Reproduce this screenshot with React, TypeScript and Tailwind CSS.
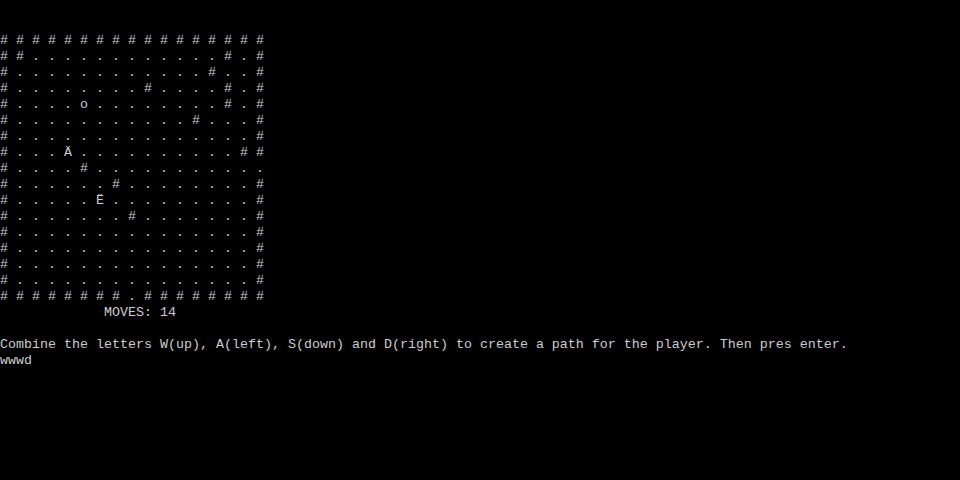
const rows = [
  '# # # # # # # # # # # # # # # # #',
  '# # . . . . . . . . . . . . # . #',
  '# . . . . . . . . . . . . # . . #',
  '# . . . . . . . . # . . . . # . #',
  '# . . . . o . . . . . . . . # . #',
  '# . . . . . . . . . . . # . . . #',
  '# . . . . . . . . . . . . . . . #',
  '# . . . Ä . . . . . . . . . . # #',
  '# . . . . # . . . . . . . . . . .',
  '# . . . . . . # . . . . . . . . #',
  '# . . . . . Ë . . . . . . . . . #',
  '# . . . . . . . # . . . . . . . #',
  '# . . . . . . . . . . . . . . . #',
  '# . . . . . . . . . . . . . . . #',
  '# . . . . . . . . . . . . . . . #',
  '# . . . . . . . . . . . . . . . #',
  '# # # # # # # # . # # # # # # # #',
];

export default function App() {
  const lines = [
    ...rows,
    '             MOVES: 14',
    '',
    'Combine the letters W(up), A(left), S(down) and D(right) to create a path for the player. Then pres enter.',
    'wwwd',
  ];

  return (
    <div className="w-[960px] h-[480px] bg-black overflow-hidden pt-[33px]">
      <pre className="m-0 text-[#cccccc] text-[13.33px] leading-[16px] font-['Liberation_Mono',monospace] whitespace-pre">
        {lines.map((line, i) => (
          <div key={i} className="h-[16px]">
            {line}
          </div>
        ))}
      </pre>
    </div>
  );
}
